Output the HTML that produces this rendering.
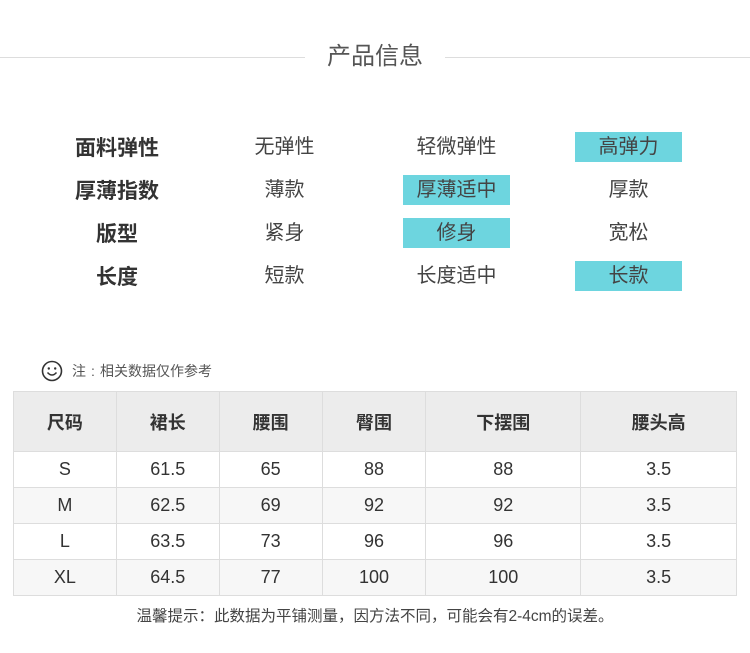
<!DOCTYPE html>
<html><head><meta charset="utf-8"><style>
*{margin:0;padding:0;box-sizing:border-box}
body{width:750px;height:653px;background:#fff;font-family:"Liberation Sans","Noto Sans CJK SC",sans-serif;position:relative;overflow:hidden;color:#333}
.abs{position:absolute}
.line{position:absolute;top:57px;height:1px;background:#ddd}
.t{position:absolute;text-align:center;font-size:20px;line-height:30px;color:#444;width:107px}
.lab{position:absolute;text-align:center;font-size:21px;line-height:30px;font-weight:bold;color:#333;width:120px;left:57px}
.hl{background:#6dd5df}
table{position:absolute;left:13px;top:391px;border-collapse:collapse;width:724px}
td{border:1px solid #ddd;text-align:center;font-size:18px;color:#333;height:36px}
tr.h td{height:60px;background:#ececec;font-weight:bold;font-size:18px}
tr.g td{background:#f7f7f7}
</style></head><body>
<div class="line" style="left:0;width:305px"></div>
<div class="line" style="left:445px;width:305px"></div>
<div class="abs" style="left:305px;width:140px;top:42px;text-align:center;font-size:24px;color:#555;line-height:30px">产品信息</div>

<div class="lab" style="top:134px">面料弹性</div>
<div class="t" style="left:231px;top:132px">无弹性</div>
<div class="t" style="left:403px;top:132px">轻微弹性</div>
<div class="t hl" style="left:575px;top:132px">高弹力</div>

<div class="lab" style="top:177px">厚薄指数</div>
<div class="t" style="left:231px;top:175px">薄款</div>
<div class="t hl" style="left:403px;top:175px">厚薄适中</div>
<div class="t" style="left:575px;top:175px">厚款</div>

<div class="lab" style="top:220px">版型</div>
<div class="t" style="left:231px;top:218px">紧身</div>
<div class="t hl" style="left:403px;top:218px">修身</div>
<div class="t" style="left:575px;top:218px">宽松</div>

<div class="lab" style="top:263px">长度</div>
<div class="t" style="left:231px;top:261px">短款</div>
<div class="t" style="left:403px;top:261px">长度适中</div>
<div class="t hl" style="left:575px;top:261px">长款</div>

<svg class="abs" style="left:41px;top:360px" width="22" height="22" viewBox="0 0 22 22"><circle cx="11" cy="11" r="9.5" fill="none" stroke="#333" stroke-width="1.6"/><circle cx="7.8" cy="8.5" r="1.2" fill="#333"/><circle cx="14.2" cy="8.5" r="1.2" fill="#333"/><path d="M6.5 12.5 Q11 17.5 15.5 12.5" fill="none" stroke="#333" stroke-width="1.5"/></svg>
<div class="abs" style="left:72px;top:362px;font-size:14px;color:#555;line-height:18px">注<span style="display:inline-block;width:14px;text-align:center">:</span>相关数据仅作参考</div>

<table>
<colgroup><col style="width:103px"><col style="width:103px"><col style="width:103px"><col style="width:104px"><col style="width:155px"><col style="width:156px"></colgroup>
<tr class="h"><td>尺码</td><td>裙长</td><td>腰围</td><td>臀围</td><td>下摆围</td><td>腰头高</td></tr>
<tr><td>S</td><td>61.5</td><td>65</td><td>88</td><td>88</td><td>3.5</td></tr>
<tr class="g"><td>M</td><td>62.5</td><td>69</td><td>92</td><td>92</td><td>3.5</td></tr>
<tr><td>L</td><td>63.5</td><td>73</td><td>96</td><td>96</td><td>3.5</td></tr>
<tr class="g"><td>XL</td><td>64.5</td><td>77</td><td>100</td><td>100</td><td>3.5</td></tr>
</table>
<div class="abs" style="left:0;width:750px;top:607px;text-align:center;font-size:15.5px;color:#444;line-height:20px">温馨提示：此数据为平铺测量，因方法不同，可能会有2-4cm的误差。</div>
</body></html>
